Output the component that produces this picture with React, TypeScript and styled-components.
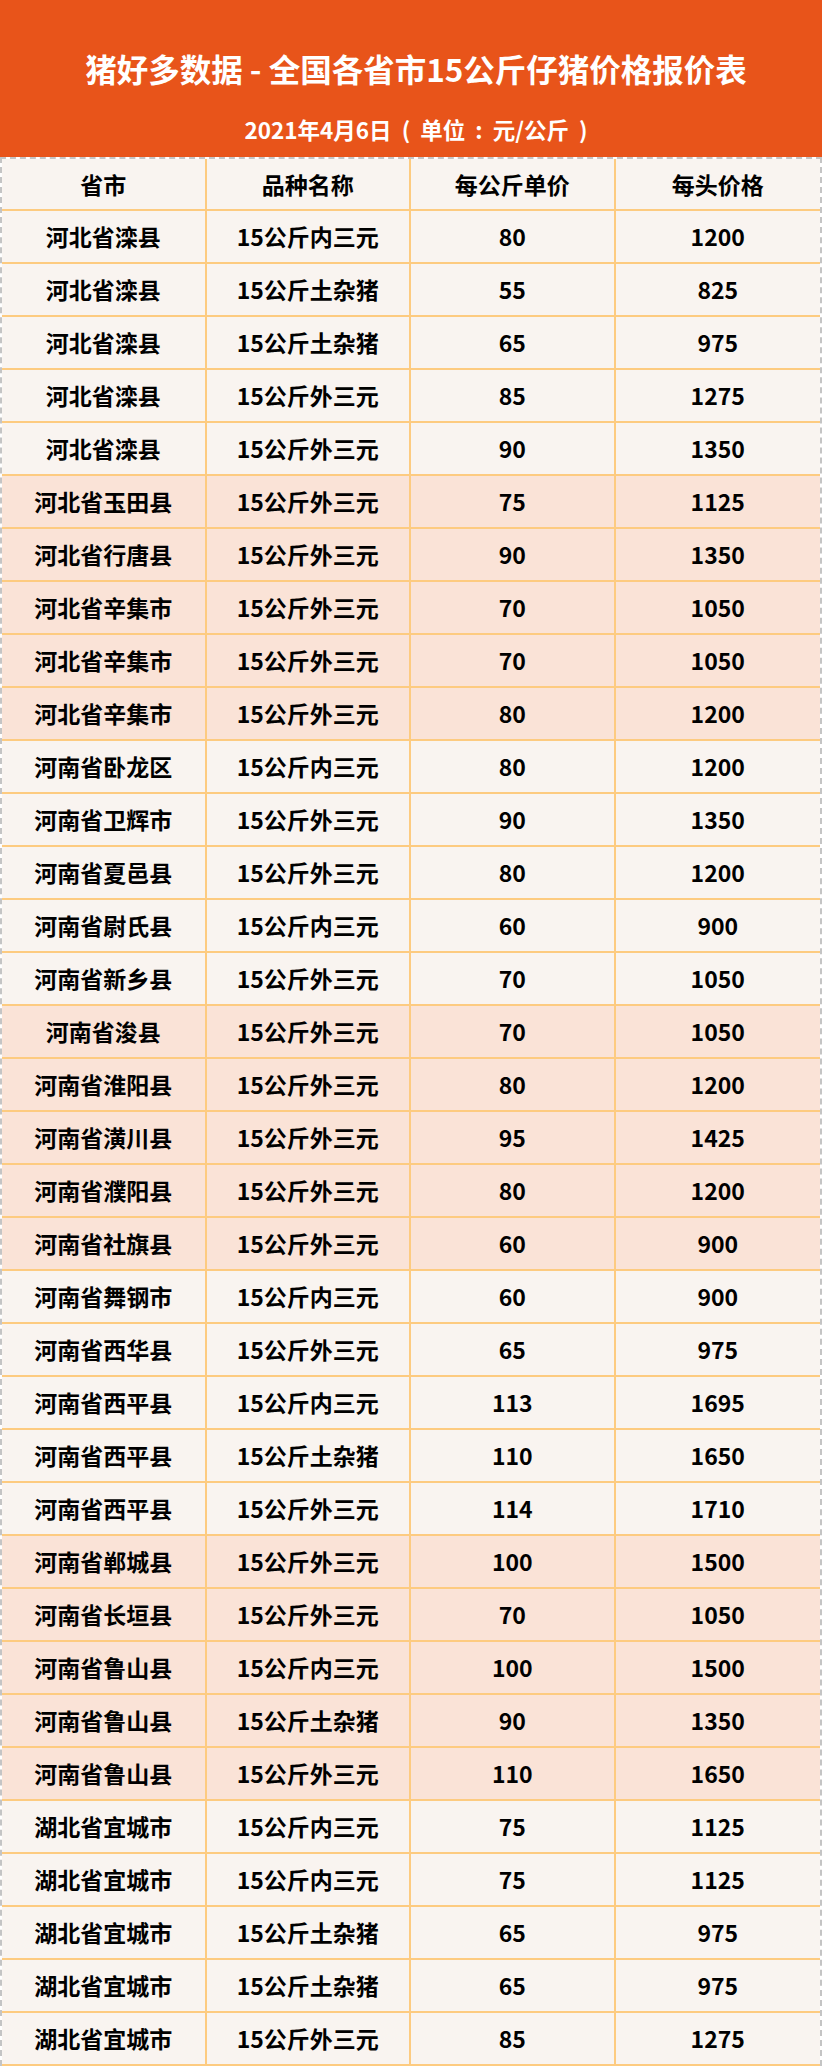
// Piglet price sheet table
import React from 'react';
import styled, { createGlobalStyle } from 'styled-components';

interface PriceRow {
  region: string;
  breed: string;
  perKg: number;
  perHead: number;
}

const rows: PriceRow[] = [
  { region: '河北省滦县', breed: '15公斤内三元', perKg: 80, perHead: 1200 },
  { region: '河北省滦县', breed: '15公斤土杂猪', perKg: 55, perHead: 825 },
  { region: '河北省滦县', breed: '15公斤土杂猪', perKg: 65, perHead: 975 },
  { region: '河北省滦县', breed: '15公斤外三元', perKg: 85, perHead: 1275 },
  { region: '河北省滦县', breed: '15公斤外三元', perKg: 90, perHead: 1350 },
  { region: '河北省玉田县', breed: '15公斤外三元', perKg: 75, perHead: 1125 },
  { region: '河北省行唐县', breed: '15公斤外三元', perKg: 90, perHead: 1350 },
  { region: '河北省辛集市', breed: '15公斤外三元', perKg: 70, perHead: 1050 },
  { region: '河北省辛集市', breed: '15公斤外三元', perKg: 70, perHead: 1050 },
  { region: '河北省辛集市', breed: '15公斤外三元', perKg: 80, perHead: 1200 },
  { region: '河南省卧龙区', breed: '15公斤内三元', perKg: 80, perHead: 1200 },
  { region: '河南省卫辉市', breed: '15公斤外三元', perKg: 90, perHead: 1350 },
  { region: '河南省夏邑县', breed: '15公斤外三元', perKg: 80, perHead: 1200 },
  { region: '河南省尉氏县', breed: '15公斤内三元', perKg: 60, perHead: 900 },
  { region: '河南省新乡县', breed: '15公斤外三元', perKg: 70, perHead: 1050 },
  { region: '河南省浚县', breed: '15公斤外三元', perKg: 70, perHead: 1050 },
  { region: '河南省淮阳县', breed: '15公斤外三元', perKg: 80, perHead: 1200 },
  { region: '河南省潢川县', breed: '15公斤外三元', perKg: 95, perHead: 1425 },
  { region: '河南省濮阳县', breed: '15公斤外三元', perKg: 80, perHead: 1200 },
  { region: '河南省社旗县', breed: '15公斤外三元', perKg: 60, perHead: 900 },
  { region: '河南省舞钢市', breed: '15公斤内三元', perKg: 60, perHead: 900 },
  { region: '河南省西华县', breed: '15公斤外三元', perKg: 65, perHead: 975 },
  { region: '河南省西平县', breed: '15公斤内三元', perKg: 113, perHead: 1695 },
  { region: '河南省西平县', breed: '15公斤土杂猪', perKg: 110, perHead: 1650 },
  { region: '河南省西平县', breed: '15公斤外三元', perKg: 114, perHead: 1710 },
  { region: '河南省郸城县', breed: '15公斤外三元', perKg: 100, perHead: 1500 },
  { region: '河南省长垣县', breed: '15公斤外三元', perKg: 70, perHead: 1050 },
  { region: '河南省鲁山县', breed: '15公斤内三元', perKg: 100, perHead: 1500 },
  { region: '河南省鲁山县', breed: '15公斤土杂猪', perKg: 90, perHead: 1350 },
  { region: '河南省鲁山县', breed: '15公斤外三元', perKg: 110, perHead: 1650 },
  { region: '湖北省宜城市', breed: '15公斤内三元', perKg: 75, perHead: 1125 },
  { region: '湖北省宜城市', breed: '15公斤内三元', perKg: 75, perHead: 1125 },
  { region: '湖北省宜城市', breed: '15公斤土杂猪', perKg: 65, perHead: 975 },
  { region: '湖北省宜城市', breed: '15公斤土杂猪', perKg: 65, perHead: 975 },
  { region: '湖北省宜城市', breed: '15公斤外三元', perKg: 85, perHead: 1275 },
];

const GlobalStyle = createGlobalStyle`
  html, body {
    margin: 0;
    padding: 0;
    background: #ffffff;
  }
  * {
    box-sizing: border-box;
  }
`;

const Sheet = styled.div`
  width: 822px;
  font-family: "Noto Sans CJK SC", "Noto Sans", sans-serif;
  font-weight: 700;
  color: #000;
`;

const Banner = styled.header`
  height: 157px;
  background: #e8541a;
  color: #ffffff;
  display: flex;
  flex-direction: column;
  align-items: center;
  padding: 53px 0 0 10px;
  gap: 33px;
`;

const Title = styled.h1`
  margin: 0;
  font-size: 31.5px;
  line-height: 1;
  font-weight: 700;
`;

const Subtitle = styled.div`
  font-size: 22.5px;
  line-height: 1;
  word-spacing: 5px;
  white-space: pre;
`;

const Table = styled.div`
  border-top: 2px dashed #c4c4c4;
  border-left: 2px dashed #c4c4c4;
  border-right: 2px dashed #c4c4c4;
`;

const Row = styled.div<{ $tone: 'light' | 'peach'; $head?: boolean }>`
  display: grid;
  grid-template-columns: repeat(4, 1fr);
  height: ${({ $head }) => ($head ? '52px' : '53px')};
  background: ${({ $tone }) => ($tone === 'peach' ? '#fae3d7' : '#f9f4f0')};
  border-bottom: 2px solid #fdcb80;
`;

const Cell = styled.div`
  display: flex;
  align-items: center;
  justify-content: center;
  font-size: 23px;
  line-height: 1;
  border-right: 2px solid #fdcb80;

  &:last-child {
    border-right: none;
  }
`;

export default function App() {
  return (
    <>
      <GlobalStyle />
      <Sheet>
        <Banner>
          <Title>猪好多数据 - 全国各省市15公斤仔猪价格报价表</Title>
          <Subtitle>2021年4月6日 ( 单位 : 元/公斤 )</Subtitle>
        </Banner>
        <Table>
          <Row $tone="light" $head>
            <Cell>省市</Cell>
            <Cell>品种名称</Cell>
            <Cell>每公斤单价</Cell>
            <Cell>每头价格</Cell>
          </Row>
          {rows.map((r, i) => (
            <Row key={i} $tone={Math.floor(i / 5) % 2 === 1 ? 'peach' : 'light'}>
              <Cell>{r.region}</Cell>
              <Cell>{r.breed}</Cell>
              <Cell>{r.perKg}</Cell>
              <Cell>{r.perHead}</Cell>
            </Row>
          ))}
        </Table>
      </Sheet>
    </>
  );
}
